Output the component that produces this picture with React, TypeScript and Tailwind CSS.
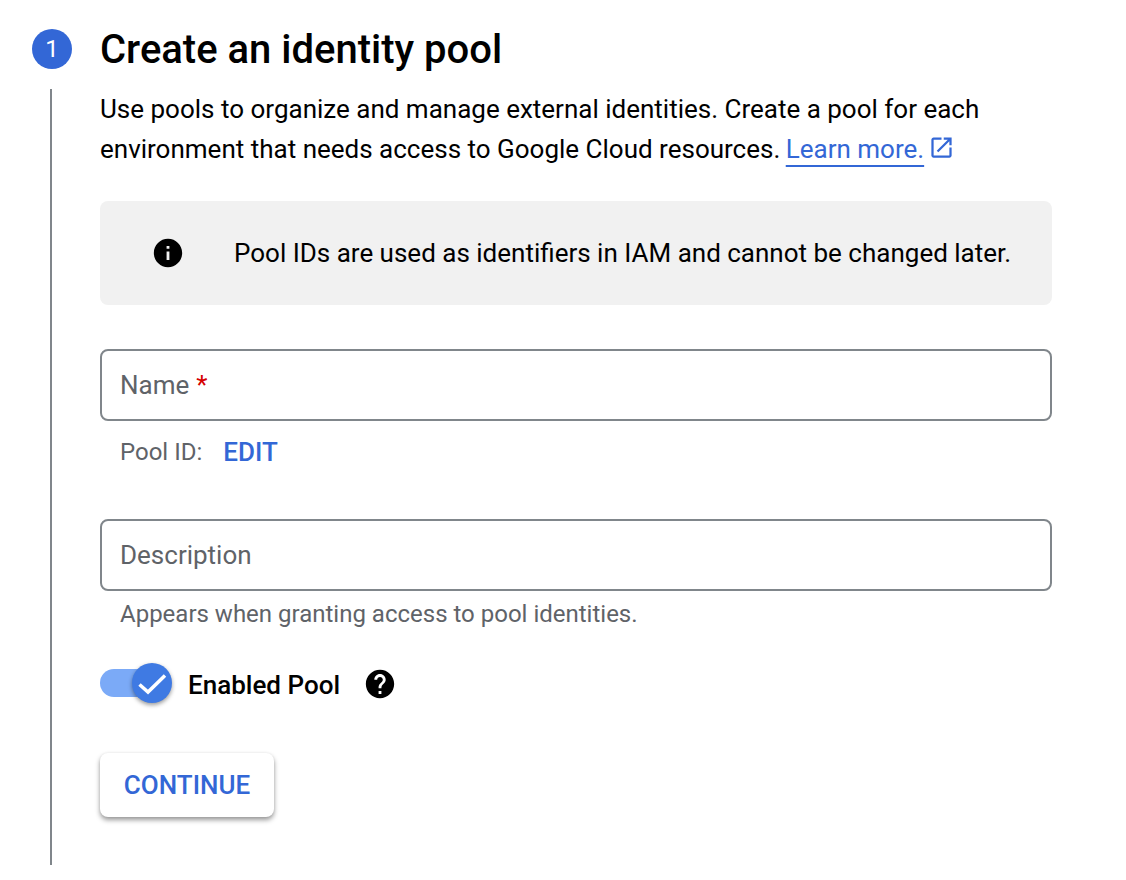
export default function App() {
  return (
    <div className="flex min-h-[880px] bg-white pl-[32px] pt-[29px] text-black" style={{ fontFamily: "Roboto, sans-serif" }}>
      <div className="flex w-[40px] flex-col items-start">
        <div className="flex h-[40px] w-[40px] items-center justify-center rounded-full bg-[#3367d6] text-[24px] text-white">1</div>
        <div className="ml-[18px] mt-[20px] h-[776px] w-[2px] bg-[#80868b]" />
      </div>
      <div className="ml-[28px] w-[952px]">
        <h1 className="pt-px text-[40px] font-medium leading-[40px]">Create an identity pool</h1>
        <p className="mt-[19px] text-[26px] leading-[40px]">
          Use pools to organize and manage external identities. Create a pool for each environment that needs access to Google Cloud resources.{" "}
          <span className="-ml-px text-[#3367d6] underline decoration-2 underline-offset-[7px]">Learn more.</span>
          <svg viewBox="0 0 24 24" className="ml-[4px] inline-block h-[27px] w-[27px] fill-[#3367d6] align-[-3px]">
            <path d="M19 19H5V5h7V3H5c-1.11 0-2 .9-2 2v14c0 1.1.89 2 2 2h14c1.1 0 2-.9 2-2v-7h-2v7zM14 3v2h3.59l-9.83 9.83 1.41 1.41L19 6.41V10h2V3h-7z" />
          </svg>
        </p>
        <div className="mt-[32px] flex h-[104px] items-center rounded-[8px] bg-[#f1f1f1] pl-[51px]">
          <svg viewBox="0 0 24 24" className="h-[34px] w-[34px] shrink-0 fill-black">
            <path d="M12 2C6.48 2 2 6.48 2 12s4.48 10 10 10 10-4.48 10-10S17.52 2 12 2zm1 15h-2v-6h2v6zm0-8h-2V7h2v2z" />
          </svg>
          <span className="ml-[49px] text-[26px]">Pool IDs are used as identifiers in IAM and cannot be changed later.</span>
        </div>
        <div className="mt-[44px] flex h-[72px] items-center rounded-[8px] border-2 border-[#80868b] pl-[18px] text-[26px] text-[#5f6368]">
          Name<span className="ml-[7px] text-[#d50000]">*</span>
        </div>
        <div className="mt-[16px] flex h-[30px] items-center pl-[20px] text-[#5f6368]">
          <span className="text-[24px]">Pool ID:</span>
          <span className="ml-[21px] text-[26px] font-medium text-[#3367d6]">EDIT</span>
        </div>
        <div className="mt-[52px] flex h-[72px] items-center rounded-[8px] border-2 border-[#80868b] pl-[18px] text-[26px] text-[#5f6368]">Description</div>
        <div className="mt-[8px] pl-[20px] text-[24px] leading-[30px] text-[#5f6368]">Appears when granting access to pool identities.</div>
        <div className="mt-[34px] flex h-[40px] items-center">
          <div className="relative h-[28px] w-[72px] shrink-0">
            <div className="h-[28px] w-[50px] rounded-full bg-[#7baaf7]" />
            <div className="absolute left-[32px] top-[-6px] h-[40px] w-[40px] rounded-full bg-[#3f7ae3] shadow-[0_2px_4px_rgba(0,0,0,0.4)]">
              <svg viewBox="0 0 40 40" className="h-[40px] w-[40px] fill-none stroke-white stroke-[3.5]">
                <path d="M7.5 21.5 16 29 33 12.5" />
              </svg>
            </div>
          </div>
          <span className="ml-[16px] pt-[4px] text-[26px] font-medium">Enabled Pool</span>
          <svg viewBox="0 0 24 24" className="ml-[23px] mt-[2px] h-[34px] w-[34px] fill-black">
            <path d="M12 2C6.48 2 2 6.48 2 12s4.48 10 10 10 10-4.48 10-10S17.52 2 12 2zm1 17h-2v-2h2v2zm2.07-7.75l-.9.92C13.45 12.9 13 13.5 13 15h-2v-.5c0-1.1.45-2.1 1.17-2.83l1.24-1.26c.37-.36.59-.86.59-1.41 0-1.1-.9-2-2-2s-2 .9-2 2H8c0-2.21 1.79-4 4-4s4 1.79 4 4c0 .88-.36 1.68-.93 2.25z" />
          </svg>
        </div>
        <button className="mt-[50px] flex h-[64px] w-[174px] items-center justify-center rounded-[8px] bg-white text-[26px] font-medium text-[#3367d6] shadow-[0_3px_5px_rgba(0,0,0,0.4),0_0_3px_rgba(0,0,0,0.06)]">CONTINUE</button>
      </div>
    </div>
  );
}
